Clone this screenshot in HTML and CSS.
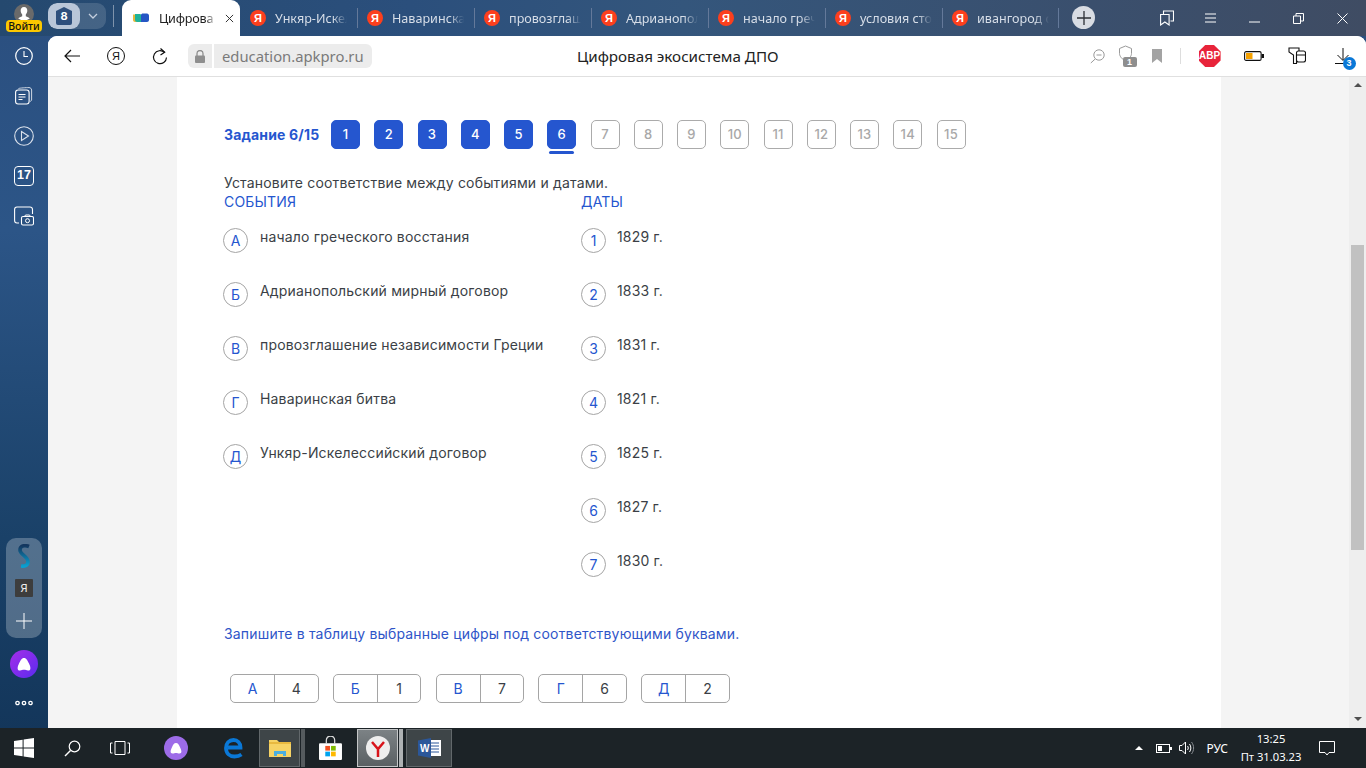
FILE: index.html
```html
<!DOCTYPE html>
<html lang="ru">
<head>
<meta charset="utf-8">
<title>Цифровая экосистема ДПО</title>
<link rel="stylesheet" href="styles.css">
</head>
<body>
<div class="browser">
  <header class="tabstrip">
    <div class="account">
      <svg class="avatar" width="20" height="20" viewBox="0 0 20 20"><circle cx="10" cy="10" r="10" fill="#6a6a6a"/><path d="M10 3c2.400 0 3.500 1.800 3.300 4-.1 1.500-.8 2.800-1.500 3.500v1.700c1.500.7 3 1.200 4 2.300a10 10 0 0 1-11.600 0c1-1.100 2.500-1.600 4-2.300v-1.700C7.500 9.800 6.800 8.500 6.700 7 6.500 4.800 7.600 3 10 3z" fill="#fff"/></svg>
      <span class="login">Войти</span>
    </div>
    <div class="tabgroup">
      <span class="tabcount"><svg width="18" height="20" viewBox="0 0 18 20"><path d="M9 1l8 4v12a2 2 0 0 1-2 2H3a2 2 0 0 1-2-2V5z" fill="#2e4f7c"/></svg><b>8</b></span>
      <span class="tabchev"><svg width="10" height="6" viewBox="0 0 10 6"><path d="M1 1l4 4 4-4" fill="none" stroke="#c3cede" stroke-width="1.300"/></svg></span>
    </div>
    <span class="groupsep"></span>
    <div class="tab active">
      <svg width="16" height="10" viewBox="0 0 16 10"><path d="M0 1.500h5c1 0 2 1 2 2V9H2C1 9 0 8 0 7z" fill="#e6b93a"/><path d="M2 1h5c1 0 1.500 1 1.500 2v6H4C3 9 2 8 2 7z" fill="#1fb39a"/><path d="M8 2c0-1 1-1.500 2-1.500h4c1 0 2 1 2 2V7c0 1-1 2-2 2H8z" fill="#2556c4"/></svg>
      <span class="tabtext">Цифрова</span>
      <svg width="9" height="9" viewBox="0 0 10 10"><path d="M1 1l8 8M9 1L1 9" stroke="#333" stroke-width="1.100"/></svg>
    </div>
    <div class="tab"><i class="ya">Я</i><span class="tabtext">Ункяр-Искел</span></div>
    <div class="tab sep"><i class="ya">Я</i><span class="tabtext">Наваринска</span></div>
    <div class="tab sep"><i class="ya">Я</i><span class="tabtext">провозглаш</span></div>
    <div class="tab sep"><i class="ya">Я</i><span class="tabtext">Адрианопол</span></div>
    <div class="tab sep"><i class="ya">Я</i><span class="tabtext">начало греч</span></div>
    <div class="tab sep"><i class="ya">Я</i><span class="tabtext">условия сто</span></div>
    <div class="tab sep last"><i class="ya">Я</i><span class="tabtext">ивангород с</span></div>
    <span class="newtab"><svg width="14" height="14" viewBox="0 0 14 14"><path d="M7 0v14M0 7h14" stroke="#2b2f36" stroke-width="1.300"/></svg></span>
    <div class="winctl">
      <svg width="14" height="16" viewBox="0 0 14 16"><path d="M.6 4.500h8.500v10.500L4.850 12 .6 15zM3.500 4.500V1h10v10l-3 .0" fill="none" stroke="#fff" stroke-width="1.100"/></svg>
      <svg class="c-menu" width="11" height="10" viewBox="0 0 11 10"><path d="M0 1h11M0 5h11M0 9h11" stroke="#fff" stroke-width="1"/></svg>
      <svg class="c-min" width="11" height="2" viewBox="0 0 11 2"><path d="M0 1h11" stroke="#fff" stroke-width="1"/></svg>
      <svg class="c-max" width="11" height="11" viewBox="0 0 11 11"><path d="M.5 3h7v7.500h-7zM3 3V.5h7.500V8H8" fill="none" stroke="#fff" stroke-width="1"/></svg>
      <svg class="c-close" width="11" height="11" viewBox="0 0 11 11"><path d="M.500.5l10 10M10.500.5l-10 10" stroke="#fff" stroke-width="1"/></svg>
    </div>
  </header>
  <div class="middle">
    <aside class="sidebar">
      <div class="side-top">
        <svg width="18" height="18" viewBox="0 0 18 18"><circle cx="9" cy="9" r="8.300" fill="none" stroke="#fff" stroke-width="1.200"/><path d="M9 4v5.500h4" fill="none" stroke="#fff" stroke-width="1.100"/></svg>
        <svg width="18" height="18" viewBox="0 0 18 18"><rect x=".6" y="3" width="13.500" height="14" rx="2.500" fill="none" stroke="#fff" stroke-width="1.100"/><path d="M3.500 1.500C5 1 11 .6 14 .6c1.500 0 2.500 1 2.600 2.400v10c0 .6-.5 1-1.600 1.400" fill="none" stroke="#cfd8e4" stroke-width="1"/><path d="M3.500 7.500h7M3.500 10h7M3.500 12.500h4" stroke="#fff" stroke-width="1"/></svg>
        <svg width="20" height="20" viewBox="0 0 20 20"><circle cx="10" cy="10" r="9.300" fill="none" stroke="#dbe2ec" stroke-width="1.100"/><path d="M7.500 5.500L14.500 10l-7 4.500z" fill="none" stroke="#dbe2ec" stroke-width="1.100"/></svg>
        <span class="cal">17</span>
        <svg width="20" height="20" viewBox="0 0 20 20"><path d="M5 17H3a2.500 2.500 0 0 1-2.400-2.500v-11A2.500 2.500 0 0 1 3 1h13a2.500 2.500 0 0 1 2.500 2.500V8" fill="none" stroke="#fff" stroke-width="1.100"/><rect x="7.500" y="10.500" width="12" height="8.500" rx="1.500" fill="#2a5180" stroke="#fff" stroke-width="1.100"/><circle cx="13.500" cy="14.700" r="2" fill="none" stroke="#fff"/><path d="M10.500 10.500l1-1.500h4l1 1.500" fill="none" stroke="#fff"/></svg>
      </div>
      <div class="side-bottom">
        <div class="pinned">
          <svg class="s-logo" width="14" height="24" viewBox="0 0 14 24"><defs><linearGradient id="sg" x1="0" y1="0" x2="0" y2="1"><stop offset="0" stop-color="#14375f"/><stop offset="1" stop-color="#0a9fd0"/></linearGradient></defs><path d="M12 2.500C7 .5 3 2 3 6c0 5 8 6 8 12 0 3-3 4.500-7 4" fill="none" stroke="url(#sg)" stroke-width="3.600"/></svg>
          <i class="yasq">Я</i>
          <svg class="pin-add" width="16" height="16" viewBox="0 0 16 16"><path d="M8 0v16M0 8h16" stroke="#fff" stroke-width="1"/></svg>
        </div>
        <span class="alice"><svg width="14" height="13" viewBox="0 0 14 13"><path d="M7 0c2.500 0 3.500 2.500 5 5.500 1.500 3 2.500 7-1 7-1.500 0-2.500-.7-4-.7s-2.500.7-4 .7c-3.500 0-2.500-4-1-7C3.500 2.500 4.500 0 7 0z" fill="#fff"/></svg></span>
        <svg class="dots" width="18" height="6" viewBox="0 0 18 6"><g fill="none" stroke="#fff" stroke-width="1.300"><circle cx="2.500" cy="3" r="1.700"/><circle cx="9" cy="3" r="1.700"/><circle cx="15.500" cy="3" r="1.700"/></g></svg>
      </div>
    </aside>
    <div class="window">
      <nav class="toolbar">
        <svg class="t-back" width="16" height="14" viewBox="0 0 16 14"><path d="M7 1L1 7l6 6M1 7h15" fill="none" stroke="#111" stroke-width="1.200"/></svg>
        <span class="t-ya">Я</span>
        <svg class="t-reload" width="16" height="17" viewBox="0 0 16 17"><path d="M12.500 4.500A6.500 6.500 0 1 0 14.500 9.500" fill="none" stroke="#111" stroke-width="1.200"/><path d="M8.500 .5l4.200 3.700-4.200 2.800" fill="none" stroke="#111" stroke-width="1.200"/></svg>
        <span class="lock"><svg width="10" height="13" viewBox="0 0 10 13"><path d="M2 6V3.500a3 3 0 0 1 6 0V6" fill="none" stroke="#8e8e8e" stroke-width="1.300"/><rect y="5.500" width="10" height="7.500" rx="1" fill="#8e8e8e"/></svg></span>
        <span class="url">education.apkpro.ru</span>
        <span class="pagetitle">Цифровая экосистема ДПО</span>
        <svg class="t-zoom" width="15" height="15" viewBox="0 0 15 15"><circle cx="9" cy="6" r="5.200" fill="none" stroke="#9a9a9a" stroke-width="1"/><path d="M6.500 6h5M5.200 10L.8 14" stroke="#9a9a9a" stroke-width="1"/></svg>
        <span class="t-shield"><svg width="15" height="17" viewBox="0 0 15 17"><path d="M7.500 1l6 2.500v5c0 3-3 6-6 7.500-3-1.500-6-4.500-6-7.500v-5z" fill="none" stroke="#9a9a9a" stroke-width="1"/></svg><b>1</b></span>
        <svg class="t-mark" width="10" height="14" viewBox="0 0 10 14"><path d="M0 0h10v14L5 10l-5 4z" fill="#a3a3a3"/></svg>
        <span class="t-sep"></span>
        <span class="abp">ABP</span>
        <svg class="t-batt" width="20" height="10" viewBox="0 0 20 10"><rect x=".6" y=".6" width="16.500" height="8.800" rx="1.500" fill="none" stroke="#111" stroke-width="1.100"/><rect x="2" y="2" width="6.500" height="6" fill="#f5a100"/><rect x="17.500" y="3" width="2.500" height="4" fill="#111"/></svg>
        <svg class="t-ext" width="18" height="18" viewBox="0 0 18 18"><path d="M1 1h10v4L8.500 8v8.500h-3V8L1 5z" fill="none" stroke="#111" stroke-width="1.100"/><rect x="8.500" y="4" width="9" height="11" rx="2" fill="#fff" stroke="#111" stroke-width="1.100"/><path d="M8.500 8h9" stroke="#111"/></svg>
        <span class="t-dl"><svg width="16" height="17" viewBox="0 0 16 17"><path d="M8 0v12M2.500 7L8 12.500 13.500 7M0 15.500h16" fill="none" stroke="#111" stroke-width="1"/></svg><b>3</b></span>
      </nav>
      <div class="viewport">
        <main class="page">
          <div class="steps">
            <strong class="steps-label">Задание 6/15</strong>
            <ol class="steps-list">
              <li class="step done">1</li><li class="step done">2</li><li class="step done">3</li><li class="step done">4</li><li class="step done">5</li><li class="step done current">6</li><li class="step">7</li><li class="step">8</li><li class="step">9</li><li class="step">10</li><li class="step">11</li><li class="step">12</li><li class="step">13</li><li class="step">14</li><li class="step">15</li>
            </ol>
          </div>
          <p class="question">Установите соответствие между событиями и датами.</p>
          <div class="match">
            <section class="col-a">
              <h2 class="col-h">СОБЫТИЯ</h2>
              <div class="item"><span class="badge">А</span><span class="item-t">начало греческого восстания</span></div>
              <div class="item"><span class="badge">Б</span><span class="item-t">Адрианопольский мирный договор</span></div>
              <div class="item"><span class="badge">В</span><span class="item-t">провозглашение независимости Греции</span></div>
              <div class="item"><span class="badge">Г</span><span class="item-t">Наваринская битва</span></div>
              <div class="item"><span class="badge">Д</span><span class="item-t">Ункяр-Искелессийский договор</span></div>
            </section>
            <section class="col-b">
              <h2 class="col-h">ДАТЫ</h2>
              <div class="item"><span class="badge">1</span><span class="item-t">1829 г.</span></div>
              <div class="item"><span class="badge">2</span><span class="item-t">1833 г.</span></div>
              <div class="item"><span class="badge">3</span><span class="item-t">1831 г.</span></div>
              <div class="item"><span class="badge">4</span><span class="item-t">1821 г.</span></div>
              <div class="item"><span class="badge">5</span><span class="item-t">1825 г.</span></div>
              <div class="item"><span class="badge">6</span><span class="item-t">1827 г.</span></div>
              <div class="item"><span class="badge">7</span><span class="item-t">1830 г.</span></div>
            </section>
          </div>
          <p class="instr">Запишите в таблицу выбранные цифры под соответствующими буквами.</p>
          <div class="answers">
            <div class="ans"><span class="ans-k">А</span><span class="ans-v">4</span></div>
            <div class="ans"><span class="ans-k">Б</span><span class="ans-v">1</span></div>
            <div class="ans"><span class="ans-k">В</span><span class="ans-v">7</span></div>
            <div class="ans"><span class="ans-k">Г</span><span class="ans-v">6</span></div>
            <div class="ans"><span class="ans-k">Д</span><span class="ans-v">2</span></div>
          </div>
        </main>
        <div class="scrollbar"><span class="thumb"></span></div>
      </div>
    </div>
  </div>
  <footer class="taskbar">
    <svg class="tb-win" width="20" height="20" viewBox="0 0 20 20"><path d="M0 3l8.600-1.200v7.700H0zM9.600 1.600L20 0v9.500H9.600zM0 10.500h8.600v7.700L0 17zM9.600 10.500H20V20L9.600 18.400z" fill="#fff"/></svg>
    <svg class="tb-search" width="17" height="17" viewBox="0 0 17 17"><circle cx="10.500" cy="6.500" r="5.300" fill="none" stroke="#fff" stroke-width="1.200"/><path d="M6.500 10.500L1 16" stroke="#fff" stroke-width="1.500"/></svg>
    <svg class="tb-task" width="20" height="14" viewBox="0 0 20 14"><path d="M5 .5h10v13H5zM2.500 2H.5v10h2M17.500 2h2v10h-2" fill="none" stroke="#fff"/></svg>
    <span class="tb-alice"><svg width="12" height="11" viewBox="0 0 14 13"><path d="M7 0c2.500 0 3.500 2.500 5 5.500 1.500 3 2.500 7-1 7-1.500 0-2.500-.7-4-.7s-2.500.7-4 .7c-3.500 0-2.500-4-1-7C3.500 2.500 4.500 0 7 0z" fill="#fff"/></svg></span>
    <svg class="tb-edge" width="20" height="22" viewBox="0 0 20 22"><path d="M5 10.500h12.500c0-4.500-3-7.500-7-7.500C6 3 3 6.500 3 11c0 5.500 4 8.500 8.500 8.500 2.500 0 5-.6 7-2" fill="none" stroke="#0a78d7" stroke-width="3.800"/></svg>
    <span class="tb-app tb-files"><svg width="22" height="18" viewBox="0 0 22 18"><path d="M0 1h8l2 2h12v15H0z" fill="#f6d365"/><rect y="3" width="22" height="2" fill="#e8b93f"/><path d="M5 17v-5h12v5h-3v-2H8v2z" fill="#4aaee0"/></svg></span>
    <span class="tb-tail"></span>
    <span class="tb-store"><svg width="23" height="24" viewBox="0 0 22 23"><path d="M7 7V4a4 4 0 0 1 8 0v3" fill="none" stroke="#ddd" stroke-width="1.200"/><rect y="7" width="22" height="16" rx="1" fill="#fff"/><rect x="6" y="9.500" width="4.500" height="4.500" fill="#f25022"/><rect x="11.500" y="9.500" width="4.500" height="4.500" fill="#7fba00"/><rect x="6" y="15" width="4.500" height="4.500" fill="#00a4ef"/><rect x="11.500" y="15" width="4.500" height="4.500" fill="#ffb900"/></svg></span>
    <span class="tb-app tb-active"><svg width="24" height="24" viewBox="0 0 24 24"><circle cx="12" cy="12" r="12" fill="#eee"/><path d="M6 6l6 7 6-7M12 13v8" fill="none" stroke="#d8141b" stroke-width="2.500"/></svg></span>
    <span class="tb-tail light"></span>
    <span class="tb-app tb-word"><svg width="23" height="20" viewBox="0 0 23 20"><rect x="9" y="2" width="14" height="16" fill="#fff"/><path d="M12 5h9M12 8h9M12 11h9M12 14h9" stroke="#2b579a"/><path d="M0 2.500L13 0v20L0 17.500z" fill="#2b579a"/><text class="word-w" x="2" y="14">W</text></svg></span>
    <div class="tray">
      <svg width="8" height="4" viewBox="0 0 8 4"><path d="M0 4l4-4 4 4z" fill="#fff"/></svg>
      <svg class="tr-batt" width="16" height="9" viewBox="0 0 16 9"><rect x=".5" y=".5" width="13" height="8" fill="none" stroke="#fff"/><rect x="2" y="2" width="4" height="5" fill="#fff"/><rect x="14" y="3" width="2" height="3" fill="#fff"/></svg>
      <svg class="tr-vol" width="16" height="14" viewBox="0 0 16 14"><path d="M.5 4.500h2.500L6.500 1v12L3 9.500H.5z" fill="none" stroke="#fff"/><path d="M8.500 5c1 1.200 1 2.800 0 4M10.500 3c1.800 2.300 1.800 5.700 0 8" fill="none" stroke="#fff"/><path d="M12.500 1c2.800 3.500 2.800 8.500 0 12" fill="none" stroke="#8a8f94"/></svg>
      <span class="tr-lang">РУС</span>
      <span class="tr-clock"><span>13:25</span><span>Пт 31.03.23</span></span>
      <svg class="tr-note" width="16" height="15" viewBox="0 0 16 15"><path d="M.5.500h15v11H10L8 14l-2-2.500H.5z" fill="none" stroke="#fff"/></svg>
    </div>
  </footer>
</div>
</body>
</html>
```
FILE: styles.css
```css
* { box-sizing: border-box; margin: 0; padding: 0; }
html, body { width: 1366px; height: 768px; overflow: hidden; }
body { font-family: "Inter", "Noto Sans", sans-serif; background: #1d2a3c; }
ol { list-style: none; }
i { font-style: normal; }

.browser { width: 1366px; height: 768px; display: flex; flex-direction: column;
  background: linear-gradient(180deg, #2b4f7f 0%, #2c5587 30%, #1a4168 70%, #123458 100%); }

/* Tab strip */
.tabstrip { height: 36px; flex: none; display: flex; align-items: center; font-family: "Noto Sans", sans-serif; font-size: 12.600px; color: #fff;
  background: linear-gradient(90deg, #25496f 0%, #2b4f7c 30%, #34567c 50%, #3a4f6d 80%, #3f4c63 100%); }
.account { width: 48px; height: 36px; flex: none; position: relative; display: flex; justify-content: center; padding-top: 4px; }
.login { position: absolute; left: 6px; top: 20px; width: 36px; height: 12px; border-radius: 4px; background: #fcc800; color: #111; font-size: 10.500px; line-height: 12px; text-align: center; font-weight: 500; }
.tabgroup { width: 58px; height: 26px; margin-top: -4px; flex: none; display: flex; border-radius: 9px; background: rgba(255,255,255,.14); overflow: hidden; }
.tabcount { width: 32px; background: #b9c6d8; border-radius: 9px; display: flex; align-items: center; justify-content: center; position: relative; }
.tabcount b { position: absolute; color: #fff; font-size: 11px; line-height: 26px; top: 0; left: 0; width: 100%; text-align: center; font-family: "Inter", sans-serif; }
.tabchev { flex: 1; display: flex; align-items: center; justify-content: center; }
.groupsep { width: 1px; height: 22px; margin: -4px 8px 0 7px; background: #7f93ab; }
.tab { width: 117px; height: 36px; flex: none; display: flex; align-items: center; gap: 9px; padding-left: 10px; position: relative; color: #d7dee8; }
.tab.active { width: 118px; background: #fff; color: #222; border-radius: 9px 9px 0 0; padding: 0 0 0 11px; }
.tab .tabtext { width: 72px; overflow: hidden; white-space: nowrap; display: block; -webkit-mask-image: linear-gradient(90deg, #000 80%, transparent 100%); mask-image: linear-gradient(90deg, #000 80%, transparent 100%); }
.tab.active .tabtext { width: 54px; margin-left: 1px; margin-right: 3px; color: #222; letter-spacing: -.2px; -webkit-mask-image: linear-gradient(90deg, #000 85%, rgba(0,0,0,.35) 100%); mask-image: linear-gradient(90deg, #000 85%, rgba(0,0,0,.35) 100%); }
.sep::before { content: ""; position: absolute; left: 0; top: 8px; height: 20px; width: 1px; background: #64799a; }
.last::after { content: ""; position: absolute; right: 0; top: 8px; height: 20px; width: 1px; background: #64799a; }
.ya { width: 16px; height: 16px; border-radius: 50%; background: #fc3f1d; color: #fff; font-size: 11px; font-weight: 700; line-height: 16px; text-align: center; flex: none; font-family: "Liberation Sans", sans-serif; }
.newtab { width: 23px; height: 23px; border-radius: 50%; background: #d8dce3; flex: none; display: flex; align-items: center; justify-content: center; margin: -1px 0 0 13px; }
.winctl { display: flex; align-items: center; margin-left: 65px; height: 36px; }
.winctl svg { flex: none; }
.c-menu { margin-left: 31px; }
.c-min { margin-left: 33px; margin-top: 8px; }
.c-max { margin-left: 33px; }
.c-close { margin-left: 33px; }

/* Main area */
.middle { flex: 1; display: flex; min-height: 0; }
.sidebar { width: 48px; flex: none; display: flex; flex-direction: column; justify-content: space-between; align-items: center; padding: 0 0 22px; }
.side-top { display: grid; grid-auto-rows: 40px; place-items: center; }
.cal { width: 20px; height: 20px; border: 1.300px solid #fff; border-radius: 4px; color: #fff; font-size: 12.500px; font-weight: 700; text-align: center; line-height: 17px; font-family: "Liberation Sans", sans-serif; }
.side-bottom { display: flex; flex-direction: column; align-items: center; }
.pinned { width: 36px; height: 100px; border-radius: 10px; background: rgba(255,255,255,.25); display: flex; flex-direction: column; align-items: center; padding: 6px 0 0; }
.yasq { width: 18px; height: 18px; margin-top: 11px; background: #3d3d3d; color: #eee; font-size: 11px; text-align: center; line-height: 18px; border-radius: 1px; }
.pin-add { margin-top: 16px; }
.alice { width: 28px; height: 28px; margin-top: 12px; border-radius: 50%; background: linear-gradient(135deg, #a52ee8, #5a2bf0); display: flex; align-items: center; justify-content: center; }
.dots { margin-top: 22px; }

.window { flex: 1; min-width: 0; display: flex; flex-direction: column; background: #fff; border-radius: 9px 9px 0 0; overflow: hidden; }
.toolbar { height: 41px; flex: none; position: relative; display: flex; align-items: center; border-bottom: 1px solid #e0e0e0; color: #111; background: #fff; }
.t-back { margin-left: 16px; flex: none; }
.t-ya { margin-left: 27px; width: 18px; height: 18px; border: 1.200px solid #111; border-radius: 50%; font-size: 11px; line-height: 16px; text-align: center; flex: none; font-family: "Liberation Sans", sans-serif; }
.t-reload { margin-left: 27px; flex: none; }
.lock { margin-left: 20px; width: 24px; height: 24px; background: #ececec; border-radius: 6px 0 0 6px; display: flex; align-items: center; justify-content: center; flex: none; }
.url { margin-left: 2px; height: 24px; padding: 0 8px; background: #ececec; border-radius: 0 6px 6px 0; color: #7a7a7a; font: 14.800px/24px "Noto Sans", sans-serif; white-space: nowrap; flex: none; }
.pagetitle { position: absolute; left: 529px; top: 0; font: 15.200px/40px "Noto Sans", sans-serif; color: #222; white-space: nowrap; }
.t-zoom { margin-left: 718px; flex: none; }
.t-shield { margin-left: 13px; position: relative; width: 19px; height: 22px; flex: none; }
.t-shield b { position: absolute; right: 0; bottom: 0; width: 14px; height: 10px; background: #8e8e8e; color: #fff; border-radius: 2px; font: 700 9px/10px "Liberation Sans", sans-serif; text-align: center; }
.t-mark { margin-left: 15px; flex: none; }
.t-sep { margin-left: 18px; width: 1px; height: 16px; background: #ddd; flex: none; }
.abp { margin-left: 18px; width: 22px; height: 22px; background: #e8243a; color: #fff; font: 700 10px/22px "Liberation Sans", sans-serif; text-align: center; clip-path: polygon(30% 0, 70% 0, 100% 30%, 100% 70%, 70% 100%, 30% 100%, 0 70%, 0 30%); flex: none; }
.t-batt { margin-left: 23px; flex: none; }
.t-ext { margin-left: 24px; flex: none; }
.t-dl { margin-left: 29px; position: relative; width: 16px; height: 17px; flex: none; }
.t-dl svg { display: block; }
.t-dl b { position: absolute; left: 8px; top: 9px; width: 13px; height: 13px; background: #0a78d7; color: #fff; border-radius: 50%; font: 700 9px/13px "Liberation Sans", sans-serif; text-align: center; }

.viewport { flex: 1; min-height: 0; display: flex; background: #f4f4f4; }
.page { width: 1044px; margin-left: 129px; background: #fff; padding: 43px 0 0 47px; flex: none; color: #3b3f46; font-size: 14px; letter-spacing: .17px; }
.scrollbar { margin-left: auto; width: 17px; background: #eeeeee; position: relative; }
.scrollbar::before, .scrollbar::after { content: ""; position: absolute; left: 5px; border-left: 4px solid transparent; border-right: 4px solid transparent; }
.scrollbar::before { top: 6px; border-bottom: 4px solid #505050; }
.scrollbar::after { bottom: 7px; border-top: 4px solid #505050; }
.thumb { position: absolute; left: 2px; right: 2px; top: 168px; height: 305px; background: #c1c1c1; }

.steps { display: flex; align-items: center; height: 29px; }
.steps-label { width: 107px; flex: none; color: #2556cf; font-weight: 700; white-space: nowrap; }
.steps-list { display: flex; gap: 14.250px; }
.step { width: 29px; height: 29px; border: 1px solid #ababab; border-radius: 5px; color: #a8a8a8; font-size: 13px; font-weight: 500; line-height: 27px; text-align: center; background: #fff; position: relative; }
.step.done { background: #2556cf; border-color: #2556cf; color: #fff; }
.current::after { content: ""; position: absolute; left: 1px; right: 1px; top: 30px; height: 3px; border-radius: 2px; background: #2556cf; }
.question { margin-top: 25px; line-height: 17px; white-space: nowrap; }
.match { display: flex; margin-top: 2px; }
.col-a { width: 357px; flex: none; }
.col-h { font-size: 14px; font-weight: 400; color: #2556cf; line-height: 17px; margin-bottom: 16px; }
.item { display: flex; height: 54px; gap: 12px; }
.col-a .badge { margin-left: -1px; }
.col-b .item { gap: 11px; }
.badge { width: 25px; height: 25px; flex: none; margin-top: 2px; border: 1px solid #a5a5a5; border-radius: 50%; color: #2556cf; text-align: center; line-height: 23px; font-size: 14px; letter-spacing: 0; }
.item-t { line-height: 20px; margin-top: 1px; white-space: nowrap; }
.instr { margin-top: 21px; color: #2f55c8; line-height: 17px; white-space: nowrap; }
.answers { display: flex; gap: 14.200px; margin: 32px 0 0 6px; }
.ans { display: flex; width: 88.600px; height: 29px; border: 1px solid #a5a5a5; border-radius: 5px; font-size: 14px; line-height: 27px; text-align: center; letter-spacing: 0; }
.ans-k { color: #2556cf; width: 44px; border-right: 1px solid #a5a5a5; flex: none; }
.ans-v { color: #3b3f46; flex: 1; }

/* Taskbar */
.taskbar { height: 40px; flex: none; background: #1c2327; display: flex; align-items: center; color: #fff; position: relative; }
.tb-win { margin-left: 14px; flex: none; }
.tb-search { margin-left: 30px; flex: none; }
.tb-task { margin-left: 29px; flex: none; }
.tb-alice { margin-left: 34px; width: 24px; height: 24px; border-radius: 50%; background: #9d6ce8; display: flex; align-items: center; justify-content: center; flex: none; }
.tb-edge { margin-left: 35px; flex: none; }
.tb-app { height: 38px; display: flex; align-items: center; justify-content: center; flex: none; }
.tb-files { width: 41px; margin-left: 16px; background: #3e4548; border: 1px solid #62686b; }
.tb-tail { width: 4px; height: 38px; margin-left: 1px; background: #555b5e; flex: none; }
.tb-tail.light { background: #aeb2b4; }
.tb-store { margin-left: 14px; width: 23px; flex: none; display: flex; }
.tb-active { width: 41px; margin-left: 15px; background: linear-gradient(180deg, #7c8285, #5a6063); border: 1px solid #c5c7c8; }
.tb-word { width: 46px; margin-left: 3px; background: #3e4548; border: 1px solid #62686b; }
.word-w { font: 700 10px "Liberation Sans", sans-serif; fill: #fff; }
.tray { margin-left: auto; display: flex; align-items: center; height: 40px; font: 12px "Noto Sans", sans-serif; }
.tr-batt { margin-left: 13px; }
.tr-vol { margin-left: 7px; }
.tr-lang { margin-left: 11px; }
.tr-clock { margin-left: 13px; width: 60px; display: flex; flex-direction: column; align-items: center; font-size: 11.200px; line-height: 18px; white-space: nowrap; }
.tr-note { margin: 0 31px 0 18px; }
```
